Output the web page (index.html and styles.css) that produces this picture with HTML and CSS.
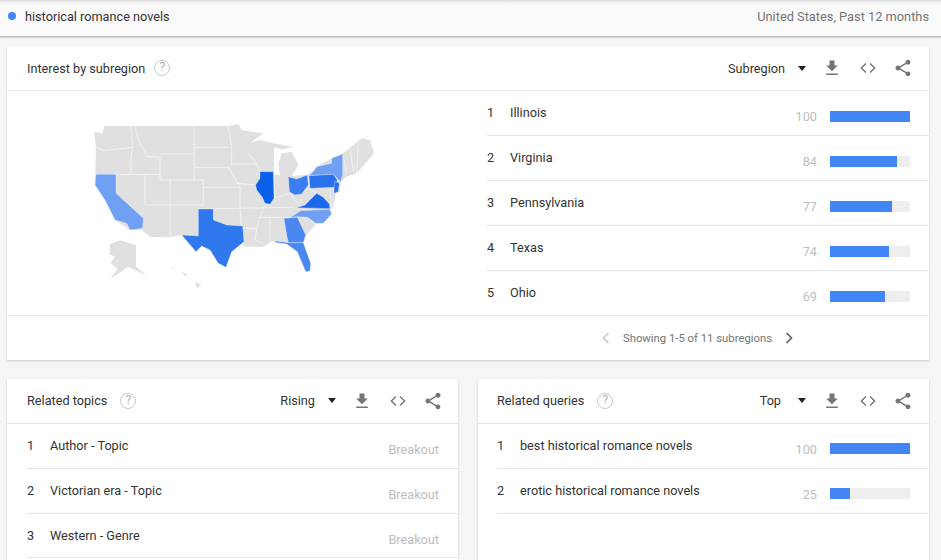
FILE: index.html
```html
<!DOCTYPE html>
<html lang="en">
<head>
<meta charset="utf-8">
<title>Google Trends</title>
<link rel="stylesheet" href="styles.css">
</head>
<body>
<svg class="defs" width="0" height="0" aria-hidden="true">
  <symbol id="i-dl" viewBox="0 0 24 24"><path d="M19 9h-4V3H9v6H5l7 7 7-7zM5 18.500v2h14v-2H5z"/></symbol>
  <symbol id="i-code" viewBox="0 0 24 24"><path class="ln" d="M9.500 6.500L4 12l5.500 5.500M14.500 6.500L20 12l-5.500 5.500"/></symbol>
  <symbol id="i-share" viewBox="0 0 24 24"><path d="M18 16.080c-.76 0-1.440.3-1.960.77L8.910 12.700c.05-.23.09-.46.09-.7s-.04-.47-.09-.7l7.050-4.110c.54.5 1.250.81 2.040.81 1.660 0 3-1.340 3-3s-1.340-3-3-3-3 1.340-3 3c0 .24.04.47.09.7L8.040 9.810C7.500 9.310 6.790 9 6 9c-1.660 0-3 1.340-3 3s1.340 3 3 3c.79 0 1.500-.31 2.040-.81l7.120 4.160c-.05.21-.08.43-.08.65 0 1.610 1.310 2.920 2.920 2.920 1.610 0 2.920-1.310 2.920-2.920s-1.310-2.920-2.920-2.920z"/></symbol>
</svg>

<header class="topbar">
  <div class="term"><span class="dot"></span><span>historical romance novels</span></div>
  <div class="scope">United States, Past 12 months</div>
</header>

<main class="page">
  <section class="card card-region">
    <div class="card-head">
      <div class="title">Interest by subregion</div><span class="help">?</span>
      <div class="spacer"></div>
      <div class="select">Subregion</div><span class="caret"></span>
      <svg class="ic ic-dl"><use href="#i-dl"/></svg>
      <svg class="ic ic-code"><use href="#i-code"/></svg>
      <svg class="ic ic-share"><use href="#i-share"/></svg>
    </div>
    <div class="region-body">
      <div class="map-wrap">
        <svg class="map" viewBox="0 0 1020 570" width="340" height="190" role="img" aria-label="Map of the United States">
          <path class="land" d="M102 65L128 70L132 48L505 48L535 42L545 60L610 70L572 98L600 90L640 100L700 112L665 118L642 112L642 195L660 195L655 160L665 130L695 125L716 165L695 197L742 195L770 170L815 145L850 130L905 85L930 90L942 130L890 190L860 200L842 215L838 245L826 252L822 285L812 300L815 312L790 340L770 340L737 378L730 400L752 460L750 483L737 485L712 425L680 400L640 392L610 410L550 410L552 395L515 425L498 472L475 460L450 420L425 408L408 425L365 375L330 382L270 380L245 360L210 360L165 330L135 270L105 225L108 110Z"/>
          <path class="land" d="M150 402L180 390L228 405L228 470L262 498L205 470L150 508L172 478L152 458L165 440L148 432Z"/>
          <path class="land" d="M405 515L425 525L410 535ZM365 485L385 495L372 497ZM335 470L345 472L340 476Z"/>
          <path class="border" d="M108 110L130 122L218 112M212 48L218 112L212 150L214 192M108 193L300 193M225 48L235 90L262 140L300 142L300 210L330 210L330 382M300 132L402 132M402 48L402 210M255 193L255 285L330 285M330 210L430 210L430 285L330 285M402 112L505 112M402 172L505 172L540 232M505 48L515 112L515 162L505 172M515 162L590 162M530 220L590 225M430 232L540 232L540 295L545 355L590 355M415 297L540 295M540 295L700 292M590 355L600 320L612 295M590 355L585 390L610 400M630 325L630 395M600 322L690 322M642 195L642 265L610 295M642 265L690 250M690 250L720 290M565 130L590 162M590 162L600 185M848 132L860 190M870 115L880 185M895 100L890 190M725 252L745 235L770 250M810 240L815 290M740 322L770 340"/>
          <path class="s s-ca" d="M108 193L168 193L168 250L250 325L248 355L210 360L200 340L165 330L135 270L105 225Z"/>
          <path class="s s-ny" d="M770 170L815 160L815 145L848 132L848 195L842 215L820 193L747 197L760 185Z"/>
          <path class="s s-nc" d="M692 322L722 302L808 298L815 312L790 340L768 340L742 322L715 320Z"/>
          <path class="s s-ga" d="M672 325L712 322L737 375L730 398L685 398L680 375Z"/>
          <path class="s s-ga" d="M640 392L685 398L730 398L752 460L750 483L737 485L712 425L680 402L650 398Z"/>
          <path class="s s-oh" d="M685 200L710 207L742 195L745 225L725 252L705 255L688 245Z"/>
          <path class="s s-tx" d="M415 297L460 297L460 330L500 345L548 348L552 395L515 425L498 472L475 460L450 420L425 408L408 425L365 375L415 378Z"/>
          <path class="s s-pa" d="M747 197L820 193L832 210L825 232L750 235Z"/>
          <path class="s s-pa" d="M825 213L838 220L835 245L822 250L822 235Z"/>
          <path class="s s-va" d="M708 293L735 285L770 250L790 262L808 282L810 296Z"/>
          <path class="s s-il" d="M600 185L640 185L642 265L630 283L615 280L607 262L590 240L587 225L600 205Z"/>
        </svg>
      </div>
      <div class="table">
        <div class="row"><span class="num">1</span><span class="name">Illinois</span><span class="val">100</span><span class="track"><span class="fill" style="width:100%"></span></span></div>
        <div class="row"><span class="num">2</span><span class="name">Virginia</span><span class="val">84</span><span class="track"><span class="fill" style="width:84%"></span></span></div>
        <div class="row"><span class="num">3</span><span class="name">Pennsylvania</span><span class="val">77</span><span class="track"><span class="fill" style="width:77%"></span></span></div>
        <div class="row"><span class="num">4</span><span class="name">Texas</span><span class="val">74</span><span class="track"><span class="fill" style="width:74%"></span></span></div>
        <div class="row"><span class="num">5</span><span class="name">Ohio</span><span class="val">69</span><span class="track"><span class="fill" style="width:69%"></span></span></div>
      </div>
    </div>
    <div class="pager">
      <svg class="chev chev-off" viewBox="0 0 10 14"><path d="M7.500 2L2.500 7l5 5"/></svg>
      <span class="pager-text">Showing 1-5 of 11 subregions</span>
      <svg class="chev" viewBox="0 0 10 14"><path d="M2.500 2l5 5-5 5"/></svg>
    </div>
  </section>

  <div class="pair">
    <section class="card half half-topics">
      <div class="card-head">
        <div class="title">Related topics</div><span class="help">?</span>
        <div class="spacer"></div>
        <div class="select">Rising</div><span class="caret"></span>
        <svg class="ic ic-dl"><use href="#i-dl"/></svg>
        <svg class="ic ic-code"><use href="#i-code"/></svg>
        <svg class="ic ic-share"><use href="#i-share"/></svg>
      </div>
      <div class="list">
        <div class="row"><span class="num">1</span><span class="name">Author - Topic</span><span class="val">Breakout</span></div>
        <div class="row"><span class="num">2</span><span class="name">Victorian era - Topic</span><span class="val">Breakout</span></div>
        <div class="row"><span class="num">3</span><span class="name">Western - Genre</span><span class="val">Breakout</span></div>
      </div>
    </section>
    <section class="card half half-queries">
      <div class="card-head">
        <div class="title">Related queries</div><span class="help">?</span>
        <div class="spacer"></div>
        <div class="select select-top">Top</div><span class="caret"></span>
        <svg class="ic ic-dl"><use href="#i-dl"/></svg>
        <svg class="ic ic-code"><use href="#i-code"/></svg>
        <svg class="ic ic-share"><use href="#i-share"/></svg>
      </div>
      <div class="list">
        <div class="row"><span class="num">1</span><span class="name">best historical romance novels</span><span class="val">100</span><span class="track"><span class="fill" style="width:100%"></span></span></div>
        <div class="row"><span class="num">2</span><span class="name">erotic historical romance novels</span><span class="val">25</span><span class="track"><span class="fill" style="width:25%"></span></span></div>
      </div>
    </section>
  </div>
</main>
</body>
</html>
```
FILE: styles.css
```css
* { box-sizing: border-box; }
html, body { margin: 0; height: 100%; }
body {
  width: 941px;
  height: 560px;
  overflow: hidden;
  background: #f5f5f5;
  font-family: Roboto, "Liberation Sans", sans-serif;
  font-size: 12.700px;
  color: #333;
}
.defs { position: absolute; }

.topbar {
  height: 37px;
  display: flex;
  align-items: center;
  justify-content: space-between;
  padding: 0 12px 4px 8px;
  background: linear-gradient(#dcdcdc 0, #f3f3f3 3px, #fafafa 6px);
  border-bottom: 1px solid #bdbdbd;
  box-shadow: 0 1px 1px rgba(0,0,0,.12);
}
.term { display: flex; align-items: center; gap: 9px; }
.dot { width: 8px; height: 8px; border-radius: 50%; background: #4285f4; }
.scope { color: #757575; font-size: 12.800px; }

.page { padding: 9px 12px 0 7px; }
.card { background: #fff; box-shadow: 0 1px 2px rgba(0,0,0,.16); }
.card-region { height: 314px; display: flex; flex-direction: column; }

.card-head {
  height: 45px;
  flex: none;
  display: flex;
  align-items: center;
  padding: 0 16px 0 20px;
  border-bottom: 1px solid #e6e6e6;
}
.half .card-head { padding-bottom: 1px; }
.half-topics .card-head { padding-right: 15px; }
.half-queries .card-head { padding-left: 19px; }
.help {
  width: 16px; height: 16px;
  margin-left: 9px;
  border: 1.500px solid #c8c8c8;
  border-radius: 50%;
  color: #b4b4b4;
  font-size: 12px;
  line-height: 13px;
  text-align: center;
}
.half .help { margin-left: 13px; }
.spacer { flex: 1; }
.select-top { margin-right: 4px; }
.caret {
  margin: 0 0 0 13px;
  width: 0; height: 0;
  border-left: 4px solid transparent;
  border-right: 4px solid transparent;
  border-top: 5px solid #212121;
}
.ic { width: 20px; height: 20px; fill: #757575; flex: none; }
.ic-dl { margin-left: 16px; }
.ic-code { margin-left: 16px; }
.ic-share { margin-left: 15px; }
.ln { fill: none; stroke: #757575; stroke-width: 1.700; }

.region-body { height: 225px; display: flex; flex: none; border-bottom: 1px solid #e6e6e6; }
.map-wrap { width: 480px; flex: none; padding: 19px 0 0 53px; }
.map { display: block; filter: blur(.35px); }
.land { fill: #e0e0e0; }
.border { fill: none; stroke: #f4f4f4; stroke-width: 2.500; }
.s { stroke: #f2f6fe; stroke-width: 1; }
.s-il { fill: #0b5fe8; }
.s-va { fill: #1c68ea; }
.s-pa { fill: #2a71ed; }
.s-tx { fill: #3078ee; }
.s-oh { fill: #3a7def; }
.s-ga { fill: #4a87f0; }
.s-ny, .s-ca, .s-nc { fill: #6fa0f4; }

.table { flex: 1; }
.row {
  height: 45px;
  display: flex;
  align-items: center;
  border-bottom: 1px solid #e4e4e4;
  padding-right: 19px;
}
.table .row:last-child { border-bottom: 0; }
.num { width: 23px; flex: none; position: relative; top: -1px; }
.name { flex: 1; position: relative; top: -1px; }
.val { color: #bdbdbd; position: relative; top: 3px; }
.track { width: 80px; height: 11px; margin-left: 13px; background: #eee; position: relative; top: 3px; flex: none; }
.fill { display: block; height: 100%; background: #4285f4; }

.pager {
  flex: 1;
  display: flex;
  align-items: center;
  justify-content: flex-end;
  padding-right: 135px;
  gap: 12px;
  color: #757575;
  font-size: 11.300px;
}
.chev { width: 10px; height: 14px; fill: none; stroke: #616161; stroke-width: 1.700; }
.chev-off { stroke: #c8c8c8; }

.pair { display: flex; gap: 20px; margin-top: 19px; }
.half { flex: 1; height: 190px; }
.list { padding-left: 20px; }
.half-queries .list { padding-left: 19px; }
.list .row { height: 44.800px; }
.list .num, .list .name { top: 0; }
.list .val { top: 4px; }
```
